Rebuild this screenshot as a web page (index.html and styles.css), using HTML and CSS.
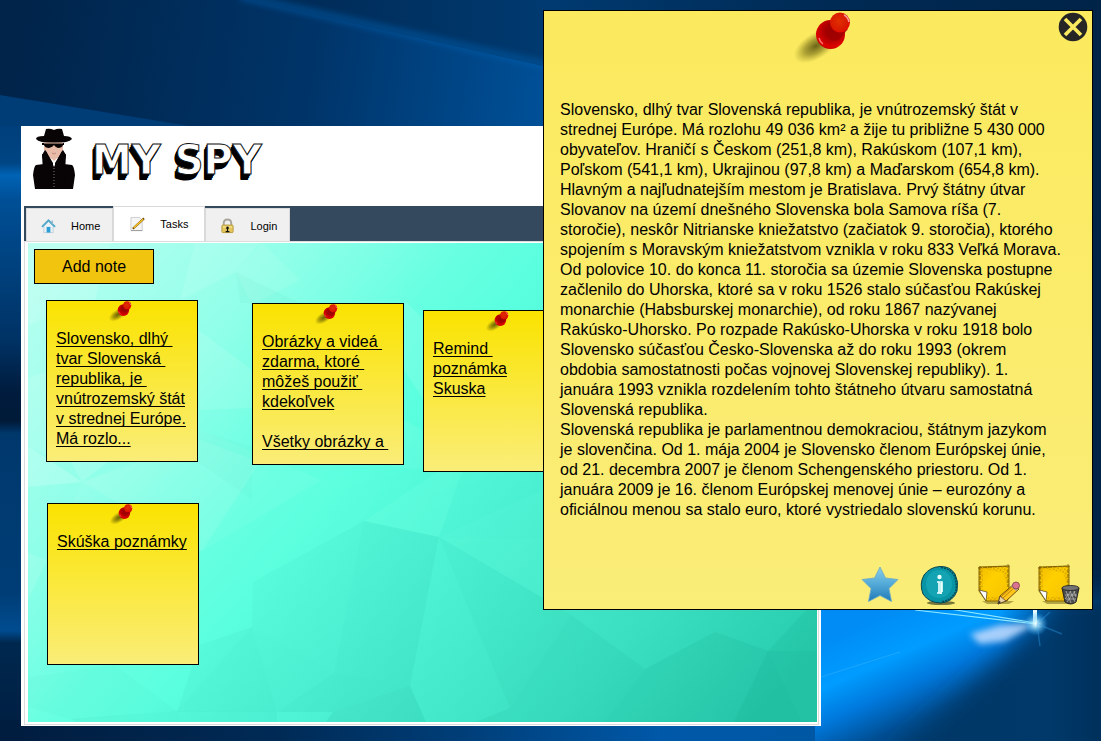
FILE: index.html
```html
<!DOCTYPE html>
<html lang="sk">
<head>
<meta charset="utf-8">
<title>My Spy</title>
<link rel="stylesheet" href="styles.css">
</head>
<body class="desktop">

<svg class="defs" width="0" height="0" aria-hidden="true">
  <defs>
    <radialGradient id="pinCap" cx="45%" cy="45%" r="60%"><stop offset="0" stop-color="#e03000"/><stop offset=".7" stop-color="#d91a00"/><stop offset="1" stop-color="#ee0000"/></radialGradient>
    <radialGradient id="pinBase" cx="55%" cy="38%" r="65%"><stop offset="0" stop-color="#8c0000"/><stop offset=".45" stop-color="#b00000"/><stop offset=".85" stop-color="#e00000"/><stop offset="1" stop-color="#c00000"/></radialGradient>
    <radialGradient id="pinShade"><stop offset="0" stop-color="#3c3800" stop-opacity=".75"/><stop offset=".5" stop-color="#4c4600" stop-opacity=".45"/><stop offset="1" stop-color="#6c6400" stop-opacity="0"/></radialGradient>
    <symbol id="pin" viewBox="0 0 60 52">
      <ellipse cx="24" cy="34" rx="25" ry="13" transform="rotate(-32 24 34)" fill="url(#pinShade)"/>
      <circle cx="38.500" cy="22.500" r="14.500" fill="url(#pinBase)"/>
      <path d="M34 23 38 9 56 17 47 28Q39 31 34 23Z" fill="#a00000" opacity=".8"/>
      <circle cx="48" cy="10.500" r="10" fill="url(#pinCap)"/>
      <path d="M52 3q4 2 5 7" fill="none" stroke="#ff9a9a" stroke-width="1.500"/>
      <path d="M27 26q1 4 4 6" fill="none" stroke="#ff7070" stroke-width="1.500"/>
    </symbol>
    <linearGradient id="sheet" x1="0" y1="0" x2="1" y2="1"><stop offset="0" stop-color="#f0ba00"/><stop offset=".4" stop-color="#ffd000"/><stop offset="1" stop-color="#f4c000"/></linearGradient>
    <pattern id="hatch" width="3" height="3" patternUnits="userSpaceOnUse" patternTransform="rotate(35)"><path d="M0 1H2" stroke="#a87800" stroke-width="1"/></pattern>
    <symbol id="stickySheet" viewBox="0 0 42 42">
      <path d="M4 37h32l-5 3H9Z" fill="#6b5d10" opacity=".5"/>
      <path d="M1 3 31 2 31 33 29 37H8L1 27Z" fill="url(#sheet)" stroke="#8a6900" stroke-width="1"/>
      <path d="M1 3 31 2V26L25 9Z" fill="url(#hatch)" opacity=".75"/>
      <path d="M1 3h4v24H1ZM10 33h18v4H9Z" fill="url(#hatch)" opacity=".7"/>
      <path d="M0 4 32 2M2 2V27M30 0V23" stroke="#70550a" stroke-width=".7" stroke-dasharray="4 1"/>
      <path d="M1 26 9 28 8 37Z" fill="#fff" stroke="#5f5122" stroke-width=".8"/>
    </symbol>
  </defs>
</svg>

<svg class="wallpaper" viewBox="0 0 1101 741" preserveAspectRatio="none" aria-hidden="true">
  <defs>
    <linearGradient id="base" x1="0" y1="0" x2="1" y2="0"><stop offset="0" stop-color="#001f44"/><stop offset=".12" stop-color="#00274f"/><stop offset=".25" stop-color="#002a55"/><stop offset=".5" stop-color="#003a70"/><stop offset=".75" stop-color="#002a54"/><stop offset="1" stop-color="#002448"/></linearGradient>
    <linearGradient id="band" gradientUnits="userSpaceOnUse" x1="20" y1="40" x2="543" y2="120"><stop offset="0" stop-color="#00244a"/><stop offset=".55" stop-color="#003468"/><stop offset="1" stop-color="#005098"/></linearGradient>
    <linearGradient id="leftStrip" x1="0" y1="0" x2="0" y2="1"><stop offset="0" stop-color="#003f7b"/><stop offset=".06" stop-color="#004584"/><stop offset=".08" stop-color="#0063b5"/><stop offset=".12" stop-color="#004f96"/><stop offset=".35" stop-color="#003264"/><stop offset=".43" stop-color="#001c3e"/><stop offset=".48" stop-color="#001a38"/><stop offset=".5" stop-color="#00386c"/><stop offset=".76" stop-color="#003d76"/><stop offset=".82" stop-color="#004c90"/><stop offset=".84" stop-color="#00284f"/><stop offset="1" stop-color="#001d40"/></linearGradient>
    <linearGradient id="floor" x1="0" y1="0" x2="1" y2="0"><stop offset="0" stop-color="#001c3e"/><stop offset=".25" stop-color="#002a55"/><stop offset=".42" stop-color="#003e78"/><stop offset=".6" stop-color="#0058a8"/><stop offset=".75" stop-color="#0058a4"/><stop offset=".88" stop-color="#004078"/><stop offset="1" stop-color="#002850"/></linearGradient>
    <linearGradient id="glow" gradientUnits="userSpaceOnUse" x1="890" y1="610" x2="950" y2="745"><stop offset="0" stop-color="#008cf4"/><stop offset=".3" stop-color="#009cff"/><stop offset=".52" stop-color="#0078dc"/><stop offset=".75" stop-color="#004f94"/><stop offset="1" stop-color="#003666"/></linearGradient>
    <radialGradient id="spark"><stop offset="0" stop-color="#fff"/><stop offset=".2" stop-color="#c8f4ff" stop-opacity=".9"/><stop offset="1" stop-color="#20a8ff" stop-opacity="0"/></radialGradient>
    <linearGradient id="rightDark" x1="0" y1="0" x2="1" y2="0"><stop offset="0" stop-color="#003a72" stop-opacity="0"/><stop offset=".5" stop-color="#003a6c"/><stop offset="1" stop-color="#00284f"/></linearGradient>
    <filter id="soft" x="-30%" y="-50%" width="160%" height="200%"><feGaussianBlur stdDeviation="13"/></filter>
    <filter id="soft2" x="-20%" y="-50%" width="140%" height="200%"><feGaussianBlur stdDeviation="3"/></filter>
  </defs>
  <rect width="1101" height="741" fill="url(#base)"/>
  <path d="M0 95 190 126H560V70L250 0 0 -20Z" fill="url(#band)"/>
  <path d="M240 -4 400 32 560 68" fill="none" stroke="#0060b0" stroke-width="8" opacity=".5" filter="url(#soft2)"/>
  <path d="M0 95 190 126V140H0Z" fill="#003c76"/>
  <rect y="126" width="22" height="615" fill="url(#leftStrip)"/>
  <rect y="720" width="1101" height="21" fill="url(#floor)"/>
  <path d="M815 600H1101V741H815Z" fill="url(#glow)"/>
  <path d="M1044 622 985 675 890 760H1140V590H1055Z" fill="#003868" filter="url(#soft)"/>
  <path d="M1000 600H1101V741H1000Z" fill="url(#rightDark)" opacity=".5"/>
  <path d="M1037 623 1000 625 970 634 980 644 1005 641Z" fill="#c5ddff" opacity=".85" filter="url(#soft2)"/>
  <path d="M915 610 1036 624M950 609 1036 623" stroke="#8de8ff" stroke-width="1.200"/>
  <path d="M821 677 900 652" stroke="#48b8ff" stroke-width="1" opacity=".4"/>
  <path d="M1033 608H1037V624H1033Z" fill="#e8fcff"/>
  <circle cx="1036" cy="624" r="12" fill="url(#spark)"/>
  <path d="M1037 624 1040 646M1037 624 1062 634M1037 624 1050 612" stroke="#36a5f0" stroke-width="1.500" opacity=".35"/>
</svg>

<main class="window">
  <header class="brand">
    <svg class="spy" viewBox="0 0 44 62" aria-hidden="true">
      <path d="M12 12H31L31 22 29 28 22 32 14 28 12 22Z" fill="#e8bca8"/>
      <path d="M14 1Q18 0 22 2 26 0 30 1L32 8Q39 8 40 11 37 15 22 15 7 15 4 11 4 8 12 8Z" fill="#080305"/>
      <path d="M10 15H32V17H31Q30 20 26 20 23 19 22 17 21 19 17 20 13 20 12 17H10Z" fill="#080305"/>
      <path d="M12 15H31" stroke="#e8bca8" stroke-width="1"/>
      <path d="M14 22 22 39 30 22 34 27 32 36 40 37Q42 38 43 47L41 61H3L1 47Q2 38 4 37L12 36 10 27Z" fill="#080305"/>
      <path d="M13 21H31L27 28 22 33 17 28Z" fill="#e8bca8"/>
      <path d="M20 25 22 26 24 25" fill="none" stroke="#c08878" stroke-width="1"/>
      <path d="M13 22 21 35V60H12L10 27ZM31 22 23 35V60H32L34 27Z" fill="#080305"/>
      <path d="M22 37V61" stroke="#aaa" stroke-width=".7" stroke-dasharray="1 2"/>
    </svg>
    <h1 class="logo">MY SPY</h1>
  </header>

  <nav class="tabs">
    <button class="tab" type="button">
      <svg class="tab-icon" viewBox="0 0 16 16" aria-hidden="true"><path d="M3 8V15H13V8L8 3Z" fill="#e9f1f7" stroke="#b7c7d4" stroke-width=".8"/><path d="M1 9 8 2 15 9" fill="none" stroke="#53a9c9" stroke-width="2"/><path d="M12 2V6" stroke="#8db8ca" stroke-width="1.500"/><rect x="6" y="9" width="4" height="6" fill="#2b9fd5"/></svg>
      <span>Home</span>
    </button>
    <button class="tab tab-active" type="button">
      <svg class="tab-icon" viewBox="0 0 16 16" aria-hidden="true"><path d="M1 1H10L13 4V15H1Z" fill="#f5f5f5" stroke="#ccc"/><path d="M1 15H13" stroke="#999"/><path d="M3 13 15 2" stroke="#765000" stroke-width="2.200"/><path d="M4 12 14 3" stroke="#ffc72e" stroke-width="1.500"/></svg>
      <span>Tasks</span>
    </button>
    <button class="tab" type="button">
      <svg class="tab-icon" viewBox="0 0 16 16" aria-hidden="true"><path d="M4 8V5Q4 1 8 1T12 5V8" fill="none" stroke="#aaa59a" stroke-width="2"/><rect x="2" y="7" width="12" height="8" rx="1" fill="#e3c65c" stroke="#b99a3c"/><path d="M3 9H13" stroke="#fff0a2"/><circle cx="8" cy="10" r="1.400" fill="#111"/><path d="M8 10V14M6 14H10" stroke="#111" stroke-width="1.200"/></svg>
      <span>Login</span>
    </button>
  </nav>

  <section class="panel">
    <div class="board">
      <svg class="facets" viewBox="28 243 789 479" preserveAspectRatio="none" aria-hidden="true">
        <defs>
          <linearGradient id="teal" gradientUnits="userSpaceOnUse" x1="100" y1="220" x2="720" y2="760"><stop offset="0" stop-color="#b4fff0"/><stop offset=".2" stop-color="#90ffe9"/><stop offset=".36" stop-color="#66ffe1"/><stop offset=".44" stop-color="#5affdf"/><stop offset=".6" stop-color="#4cf1d3"/><stop offset=".82" stop-color="#39dfc0"/><stop offset="1" stop-color="#28ccae"/></linearGradient>
        </defs>
        <rect x="28" y="243" width="789" height="479" fill="url(#teal)"/>
        <g fill="#fff">
          <path d="M28 243H110L95 300 28 325Z" opacity=".12"/>
          <path d="M195 243H260L236 272 180 300Z" opacity=".1"/>
          <path d="M236 272 262 243 300 280 252 305Z" opacity=".08"/>
          <path d="M28 378 46 372V455L28 446Z" opacity=".1"/>
          <path d="M28 446 82 482 28 487Z" opacity=".18"/>
          <path d="M82 482 200 430 322 480 202 551 47 560Z" opacity=".05"/>
          <path d="M82 482 70 460H110Z" opacity=".12"/>
          <path d="M198 330 252 370V408L200 410Z" opacity=".1"/>
          <path d="M260 462 202 551 82 482 200 440Z" opacity=".08"/>
          <path d="M404 300 424 320V400L404 370Z" opacity=".1"/>
          <path d="M404 420 500 472H440L390 466Z" opacity=".06"/>
          <path d="M28 553 47 560 28 600Z" opacity=".1"/>
        </g>
        <g fill="#047c68">
          <path d="M236 272 300 303H240Z" opacity=".03"/>
          <path d="M198 430 252 447V500L198 462Z" opacity=".02"/>
          <path d="M253 582 364 521 334 673Z" opacity=".03"/>
          <path d="M364 521 439 537 410 686 334 673Z" opacity=".05"/>
          <path d="M252 627 334 673 277 712H177L199 645Z" opacity=".04"/>
          <path d="M252 627 277 712 177 711Z" opacity=".02"/>
          <path d="M253 582 334 673 252 627Z" opacity=".03"/>
          <path d="M28 677 115 665 177 711 72 720 28 707Z" opacity=".02"/>
          <path d="M72 719 177 711 180 722H75Z" opacity=".05"/>
          <path d="M177 711 277 712V722H180Z" opacity=".04"/>
          <path d="M334 673 410 686 333 712H277Z" opacity=".06"/>
          <path d="M333 712 410 686 426 722H326Z" opacity=".09"/>
          <path d="M439 537 571 615 510 708Z" opacity=".03"/>
          <path d="M510 708 571 615 583 722H475Z" opacity=".05"/>
          <path d="M571 615 645 669 604 722H583Z" opacity=".05"/>
          <path d="M645 669 715 632 717 722H604Z" opacity=".08"/>
          <path d="M715 632 768 651 734 722H717Z" opacity=".08"/>
          <path d="M768 651H817V722H734Z" opacity=".12"/>
          <path d="M768 651 802 722H734Z" opacity=".02"/>
          <path d="M768 651 807 609H817V651Z" opacity=".07"/>
        </g>
        <g fill="#68ffe0">
          <path d="M439 537 543 490V538Z" opacity=".12"/>
          <path d="M439 537 543 538V598Z" opacity=".18"/>
          <path d="M364 521 470 450 439 537Z" opacity=".35"/>
          <path d="M253 582 322 480 390 466 364 521Z" opacity=".15"/>
        </g>
      </svg>

      <button class="add" type="button">Add note</button>

      <article class="note note-a">
        <svg class="note-pin" aria-hidden="true"><use href="#pin"/></svg>
        <a class="note-link" href="#detail">Slovensko, dlhý 
tvar Slovenská 
republika, je 
vnútrozemský štát
v strednej Európe.
Má rozlo...</a>
      </article>
      <article class="note note-b">
        <svg class="note-pin" aria-hidden="true"><use href="#pin"/></svg>
        <a class="note-link" href="#detail">Obrázky a videá 
zdarma, ktoré 
môžeš použiť 
kdekoľvek

Všetky obrázky a </a>
      </article>
      <article class="note note-c">
        <svg class="note-pin" aria-hidden="true"><use href="#pin"/></svg>
        <a class="note-link" href="#detail">Remind 
poznámka
Skuska</a>
      </article>
      <article class="note note-d">
        <svg class="note-pin" aria-hidden="true"><use href="#pin"/></svg>
        <a class="note-link" href="#detail">Skúška poznámky</a>
      </article>
    </div>
  </section>
</main>

<aside class="detail" id="detail">
  <svg class="detail-pin" aria-hidden="true"><use href="#pin"/></svg>
  <button class="close" type="button" aria-label="Close">
    <svg class="close-icon" viewBox="0 0 30 30" aria-hidden="true"><circle cx="15" cy="15" r="14.300" fill="#252525"/><path d="M7 7 23 23M23 7 7 23" stroke="#faea60" stroke-width="3.600"/></svg>
  </button>
  <p class="detail-text">Slovensko, dlhý tvar Slovenská republika, je vnútrozemský štát v
strednej Európe. Má rozlohu 49 036 km² a žije tu približne 5 430 000
obyvateľov. Hraničí s Českom (251,8 km), Rakúskom (107,1 km),
Poľskom (541,1 km), Ukrajinou (97,8 km) a Maďarskom (654,8 km).
Hlavným a najľudnatejším mestom je Bratislava. Prvý štátny útvar
Slovanov na území dnešného Slovenska bola Samova ríša (7.
storočie), neskôr Nitrianske kniežatstvo (začiatok 9. storočia), ktorého
spojením s Moravským kniežatstvom vznikla v roku 833 Veľká Morava.
Od polovice 10. do konca 11. storočia sa územie Slovenska postupne
začlenilo do Uhorska, ktoré sa v roku 1526 stalo súčasťou Rakúskej
monarchie (Habsburskej monarchie), od roku 1867 nazývanej
Rakúsko-Uhorsko. Po rozpade Rakúsko-Uhorska v roku 1918 bolo
Slovensko súčasťou Česko-Slovenska až do roku 1993 (okrem
obdobia samostatnosti počas vojnovej Slovenskej republiky). 1.
januára 1993 vznikla rozdelením tohto štátneho útvaru samostatná
Slovenská republika.
Slovenská republika je parlamentnou demokraciou, štátnym jazykom
je slovenčina. Od 1. mája 2004 je Slovensko členom Európskej únie,
od 21. decembra 2007 je členom Schengenského priestoru. Od 1.
januára 2009 je 16. členom Európskej menovej únie – eurozóny a
oficiálnou menou sa stalo euro, ktoré vystriedalo slovenskú korunu.</p>
  <footer class="actions">
    <button class="action" type="button" aria-label="Favourite">
      <svg class="action-icon" viewBox="0 0 42 42" aria-hidden="true"><defs><linearGradient id="starFill" x1="0" y1="0" x2="0" y2="1"><stop offset="0" stop-color="#8acbe8"/><stop offset=".45" stop-color="#58aeda"/><stop offset="1" stop-color="#1f78b8"/></linearGradient></defs><path d="M22 3 27.500 14 40 15.500 31 24.500 33.500 37.500 22 31.500 10.500 37.500 13 24.500 4 15.500 16.500 14Z" fill="url(#starFill)" stroke="#6ba9c4" stroke-width=".8" stroke-linejoin="round"/></svg>
    </button>
    <button class="action" type="button" aria-label="Information">
      <svg class="action-icon" viewBox="0 0 42 42" aria-hidden="true"><ellipse cx="23" cy="39" rx="14" ry="2" fill="#3e4420" opacity=".7"/><path d="M22 2.500Q32 2 37 10 41 18 39 27 35 38 23 39 11 39 5 30 1 20 6 11 12 3 22 2.500Z" fill="#0794a4" stroke="#0a4650" stroke-width="1"/><path d="M23 3.500Q31 4 36 11 39 18 38 27 34 36 23 38" fill="none" stroke="#064b56" stroke-width="1.500" stroke-dasharray="2 1"/><ellipse cx="21" cy="20" rx="13" ry="14" fill="#22b2c0" opacity=".5"/><circle cx="21.500" cy="13" r="2.200" fill="#e8ffff"/><path d="M19 18H24V28M21 18V29M23 19V30M19 29H24" stroke="#e8ffff" stroke-width="1.700" fill="none"/></svg>
    </button>
    <button class="action" type="button" aria-label="Edit note">
      <svg class="action-icon" viewBox="0 0 42 42" aria-hidden="true"><use href="#stickySheet"/><path d="M20 40 22 32 36 20 41 25 28 37Z" fill="#ffc51b" stroke="#74500a" stroke-width="1"/><path d="M24 35 38 22M23 33 36 21" stroke="#a96e00" stroke-width=".8"/><path d="M20 40 22 32 28 37Z" fill="#ead3a0" stroke="#54432c" stroke-width=".8"/><path d="M20 40 21 37 23 38Z" fill="#222"/><path d="M33 22 36 19 41 24 38 27Z" fill="#aaa"/><circle cx="38" cy="21.500" r="3.500" fill="#da7590" stroke="#7d384c" stroke-width=".8"/></svg>
    </button>
    <button class="action" type="button" aria-label="Delete note">
      <svg class="action-icon" viewBox="0 0 42 42" aria-hidden="true"><use href="#stickySheet"/><path d="M24 24 27 38Q33 42 38 38L41 24Z" fill="#4b4b4b" stroke="#222" stroke-width="1"/><path d="M28 27 33 39M32 27 37 38M36 27 38 33M37 27 29 38M33 27 27 35M27 31H39M28 35H38" stroke="#b5b5b5" stroke-width=".8"/><ellipse cx="32.500" cy="24" rx="8.500" ry="2.500" fill="#747474" stroke="#303030" stroke-width="1"/></svg>
    </button>
  </footer>
</aside>

</body>
</html>
```

FILE: styles.css
```css
* { box-sizing: border-box; }

.desktop {
  position: relative;
  margin: 0;
  min-height: 100vh;
  overflow: hidden;
  background: #00284f;
  color: #000;
  font-family: "Liberation Sans", Arial, sans-serif;
  font-size: 16px;
  line-height: 20px;
}

.defs { position: absolute; }

.wallpaper {
  position: absolute;
  inset: 0;
  width: 100%;
  height: 100%;
}

button {
  margin: 0;
  padding: 0;
  border: 0;
  background: none;
  color: inherit;
  font: inherit;
  cursor: pointer;
}

/* Main window */
.window {
  position: absolute;
  left: 21px;
  top: 126px;
  display: flex;
  flex-direction: column;
  width: 800px;
  min-height: 600px;
  padding: 0 2px 1px 3px;
  background: #fff;
}

.brand {
  display: flex;
  align-items: flex-start;
  gap: 16px;
  height: 80px;
  padding: 2px 0 0 8px;
}

.spy {
  width: 44px;
  height: 62px;
}

.logo {
  margin: 6px 0 0;
  color: #fff;
  font-family: "DejaVu Sans", sans-serif;
  font-size: 40px;
  font-weight: bold;
  line-height: 52px;
  -webkit-text-stroke: 1px #111;
  text-shadow: -1px 1px 0 #000, -1px 2px 0 #000, -2px 3px 0 #000, -2px 4px 0 #000, -3px 5px 0 #000, -3px 6px 0 #000;
}

.tabs {
  display: flex;
  align-items: flex-end;
  height: 35px;
  padding-left: 2px;
  background: #34495e;
}

.tab {
  display: flex;
  align-items: center;
  gap: 15px;
  height: 33px;
  padding: 2px 12px 0 14px;
  border: 1px solid #d9d9d9;
  border-bottom: 0;
  background: #f0f0f0;
  font-size: 11px;
  line-height: 16px;
}

.tab-active {
  height: 35px;
  padding: 0 16px;
  background: #fff;
}

.tab-icon {
  width: 15px;
  height: 16px;
}

.panel {
  display: flex;
  flex: 1;
  padding: 1px 1px 2px 3px;
  border: 1px solid #dcdcdc;
}

.board {
  position: relative;
  flex: 1;
  padding: 6px;
}

.facets {
  position: absolute;
  inset: 0;
  width: 100%;
  height: 100%;
}

.add {
  position: relative;
  width: 120px;
  height: 35px;
  border: 1px solid #000;
  background: #f1c40f;
}

/* Notes pinned on the board */
.note {
  position: absolute;
  width: 152px;
  height: 162px;
  padding: 0 9px;
  overflow: hidden;
  border: 1px solid #000;
  background: linear-gradient(#fae300, #faed78);
}

.note-a { left: 18px; top: 57px; }
.note-b { left: 224px; top: 60px; }
.note-c { left: 395px; top: 67px; }
.note-d { left: 19px; top: 260px; }

.note-pin {
  display: block;
  width: 24px;
  height: 21px;
  margin: 0 0 7px 52px;
}

.note-link {
  display: block;
  color: #000;
  white-space: pre;
  text-decoration: underline;
  text-decoration-thickness: 1px;
  text-decoration-skip-ink: none;
  text-underline-offset: 2px;
}

/* Opened note */
.detail {
  position: absolute;
  right: 8px;
  top: 10px;
  display: flex;
  flex-direction: column;
  width: 550px;
  min-height: 600px;
  padding: 1px 12px 3px 16px;
  border: 1px solid #000;
  background: linear-gradient(#fbea5e, #faed78);
}

.detail-pin {
  width: 60px;
  height: 52px;
  margin: 0 0 36px 232px;
}

.close {
  position: absolute;
  top: 1px;
  right: 4px;
  width: 30px;
  height: 30px;
}

.close-icon {
  display: block;
  width: 30px;
  height: 30px;
}

.detail-text {
  margin: 0;
  white-space: pre;
}

.actions {
  display: flex;
  justify-content: flex-end;
  gap: 18px;
  margin-top: auto;
}

.action {
  width: 42px;
  height: 42px;
}

.action-icon {
  display: block;
  width: 42px;
  height: 42px;
}
```
